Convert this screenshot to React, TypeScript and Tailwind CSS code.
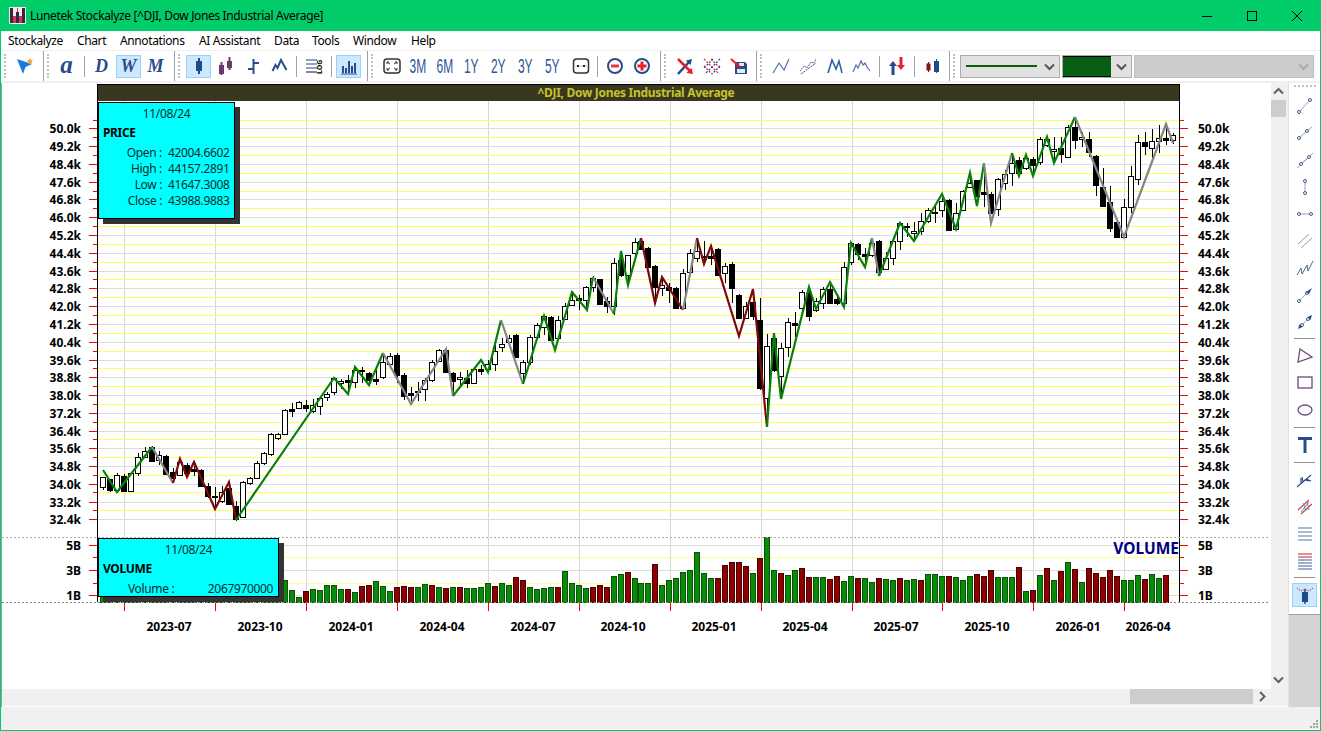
const candles: number[][] = [
  [477,487,477,490,0],[479,490,479,492,1],[475,490,473,490,0],[476,491,474,491,1],[473,491,473,491,0],
  [457,473,453,476,0],[451,457,447,458,0],[447,461,446,462,1],[455,460,451,465,0],[456,474,455,475,1],
  [472,478,468,483,1],[462,475,460,475,0],[465,473,463,477,1],[469,471,466,476,1],[470,486,469,487,1],
  [486,496,483,498,1],[496,497,487,506,1],[492,501,486,503,0],[488,504,485,504,1],[506,519,501,521,1],
  [482,517,481,517,0],[478,483,477,485,0],[463,478,461,479,0],[453,463,452,465,0],[434,454,433,456,0],
  [434,438,433,440,0],[410,434,409,435,0],[409,411,403,417,1],[402,408,401,409,0],[405,408,400,412,1],
  [405,411,399,413,0],[398,406,397,415,0],[394,397,392,401,0],[378,392,377,395,0],[381,383,379,389,0],
  [380,382,375,390,1],[370,382,367,388,0],[370,371,367,383,1],[373,380,372,383,1],[379,381,370,385,1],
  [362,377,355,379,0],[356,364,353,365,0],[355,375,353,383,1],[375,396,373,400,1],[393,395,387,401,1],
  [391,392,382,401,0],[380,389,378,401,0],[362,380,360,382,0],[350,361,349,362,0],[350,372,349,373,1],
  [373,381,372,395,1],[377,379,372,387,0],[378,383,370,388,1],[369,383,368,384,0],[369,371,365,375,1],
  [364,369,360,372,0],[351,364,340,371,0],[344,347,338,352,0],[338,342,335,345,0],[335,357,334,358,1],
  [362,373,360,383,0],[337,362,335,365,0],[325,337,323,340,0],[316,327,315,335,0],[317,340,316,340,1],
  [320,338,316,339,0],[306,319,303,320,0],[300,305,292,306,0],[298,300,295,310,1],[287,300,286,310,0],
  [278,287,276,292,0],[279,304,279,305,1],[301,306,297,313,1],[263,306,258,315,0],[260,275,258,277,1],
  [255,275,255,285,0],[242,253,238,260,0],[241,249,238,250,1],[248,267,247,268,1],[266,287,265,302,1],
  [285,288,277,296,0],[287,290,283,303,1],[288,308,287,309,1],[273,308,269,310,0],[253,272,249,273,0],
  [251,258,238,262,0],[256,257,241,265,1],[256,258,245,265,1],[249,275,248,276,1],[266,273,263,283,0],
  [264,288,262,303,1],[295,318,294,318,1],[306,318,302,319,0],[302,316,302,320,1],[320,388,298,390,1],
  [346,398,334,425,0],[338,370,333,372,1],[348,376,343,396,0],[322,347,318,357,0],[323,325,312,337,1],
  [292,308,290,310,0],[293,316,288,321,1],[301,310,298,312,0],[289,303,287,309,0],[289,303,285,304,1],
  [299,303,295,305,1],[267,303,262,304,0],[243,262,242,265,0],[244,254,243,260,1],[254,256,248,265,1],
  [243,255,238,257,0],[241,272,240,273,1],[258,269,252,270,0],[241,258,240,265,0],[223,241,222,250,0],
  [226,227,223,237,1],[231,233,222,240,0],[221,231,213,235,0],[210,221,208,223,0],[212,213,205,223,1],
  [201,210,198,217,0],[200,230,199,231,1],[213,229,203,230,0],[191,210,190,211,0],[183,187,173,188,0],
  [180,196,180,198,1],[192,194,163,207,1],[194,213,192,213,1],[179,209,178,216,0],[174,183,170,190,0],
  [163,173,153,186,0],[160,173,157,176,1],[158,168,155,170,0],[159,165,157,175,1],[139,162,137,165,0],
  [139,145,137,147,0],[149,151,137,163,0],[148,154,137,163,1],[127,157,125,157,0],[127,140,117,149,1],
  [137,139,132,147,0],[139,152,132,157,1],[156,185,155,196,1],[187,206,168,207,1],[202,228,186,232,1],
  [222,237,222,238,1],[207,237,199,238,0],[176,207,166,213,0],[142,179,135,185,0],[142,146,132,155,1],
  [141,148,129,158,0],[138,141,125,153,0],[138,140,125,145,1],[135,140,133,144,0],
]

// negative = maroon bar
const volumes: number[] = [
  ...Array(26).fill(596),
  580,590,597,-591,589,590,585,585,589,-589,592,-586,-585,581,586,591,-587,
  -586,-587,587,584,-585,587,-588,587,-587,588,588,587,583,-586,583,585,-577,-580,587,589,588,587,-587,
  571,583,585,588,-587,-585,-587,576,574,-572,578,583,583,-564,585,580,578,572,570,552,573,578,-578,
  -565,-562,-562,-566,573,-558,537,570,-573,575,570,-568,-577,577,577,-579,-576,581,576,-578,578,582,
  -578,579,580,-578,580,579,-580,574,574,576,-576,577,580,576,-574,-576,-570,577,
  577,577,-567,591,-590,575,-568,580,-571,562,-569,582,-568,-573,-577,-570,-576,580,580,575,-579,574,578,-575,
]

const G = '#0a800a'
const R = '#7d0a0a'
const S = '#858585'
const zigzag: [string, number[]][] = [
  [G, [103,470,117,492,152,447]],
  [S, [152,447,173,483]],
  [R, [173,483,180,459,187,477,194,462,215,509,229,482,236,520]],
  [G, [236,520,334,378,348,394,355,367,369,385,383,353]],
  [S, [383,353,411,404,446,349,453,396]],
  [G, [453,396,481,360,488,372,501,320]],
  [S, [501,320,523,384]],
  [G, [523,384,544,316,555,350,572,292,587,310,593,277]],
  [S, [593,277,614,314]],
  [G, [614,314,621,251,628,285,641,238]],
  [R, [641,238,655,303,662,277,683,310]],
  [S, [683,310,697,238]],
  [R, [697,238,704,264,711,246,739,336,753,289,767,427]],
  [G, [767,427,774,333,781,399,809,287,816,309,830,282,844,307,851,243,865,267,872,238]],
  [S, [872,238,879,276]],
  [G, [879,276,900,223,914,241,942,194,956,229,970,173,977,206,984,163]],
  [S, [984,163,991,223,1012,153]],
  [G, [1012,153,1019,176,1026,155,1033,176,1047,137,1054,163,1075,117]],
  [S, [1075,117,1124,237,1166,124,1173,143]],
]

const pitch = 1070 / 153
const cx = (i: number) => Math.round(103 + i * pitch)
const priceLabels = ['50.0k','49.2k','48.4k','47.6k','46.8k','46.0k','45.2k','44.4k','43.6k','42.8k','42.0k','41.2k','40.4k','39.6k','38.8k','38.0k','37.2k','36.4k','35.6k','34.8k','34.0k','33.2k','32.4k']
const grayY = [128,146,164,182,199,217,235,253,271,288,306,324,342,360,377,395,413,431,448,466,484,502,519].map(y => y + 0.5)
const yellowY = [120,137,155,173,191,208,226,244,262,279,297,315,333,351,368,386,404,422,439,457,475,492,510].map(y => y + 0.5)
const gridX = [124,215,306,397,488,579,670,761,852,942,1033,1124]
const dates: [string, number][] = [['2023-07',169],['2023-10',260],['2024-01',351],['2024-04',442],['2024-07',533],['2024-10',623],['2025-01',714],['2025-04',805],['2025-07',896],['2025-10',987],['2026-01',1078],['2026-04',1148]]
const volLabels: [string, number][] = [['5B',545],['3B',570],['1B',595]]

function Chart() {
  return (
    <svg viewBox="2 83 1269 606" className="block w-[1269px] h-[606px] shrink-0 bg-white">
      <rect x="97" y="84" width="1083" height="17" fill="#3a3720" />
      <line x1="97" y1="84.5" x2="1180" y2="84.5" stroke="#000" />
      <text x="636" y="97" textAnchor="middle" fill="#c4c42b" className="text-[12px] font-bold tracking-[-0.3px]">^DJI, Dow Jones Industrial Average</text>

      {gridX.map(x => <line key={x} x1={x + 0.5} y1="101" x2={x + 0.5} y2="602" stroke="#d8d8d8" />)}
      {grayY.map(y => <line key={y} x1="98" y1={y} x2="1179" y2={y} stroke="#dcdcdc" />)}
      {yellowY.map(y => <line key={y} x1="98" y1={y} x2="1179" y2={y} stroke="#ffff55" />)}
      {[545.5, 570.5, 595.5].map(y => <line key={y} x1="98" y1={y} x2="1179" y2={y} stroke="#dcdcdc" />)}
      {[557.5, 583.5].map(y => <line key={y} x1="98" y1={y} x2="1179" y2={y} stroke="#ffff88" />)}

      {volumes.map((v, i) => (
        <rect key={i} x={cx(i) - 2.5} y={Math.abs(v) + 0.5} width="5" height={602 - Math.abs(v)} fill={v < 0 ? '#8f0000' : '#078c07'} stroke={v < 0 ? '#4d0000' : '#0a520a'} />
      ))}

      {candles.map(([t, b, h, l, f], i) => (
        <g key={i}>
          <line x1={cx(i) + 0.5} y1={h} x2={cx(i) + 0.5} y2={l} stroke="#000" />
          <rect x={cx(i) - 2.5} y={t + 0.5} width="5" height={Math.max(b - t, 1)} fill={f ? '#000' : '#fff'} stroke="#000" />
        </g>
      ))}

      {zigzag.map(([c, p], i) => (
        <polyline key={i} points={p.join(',')} fill="none" stroke={c} strokeWidth="2.2" strokeMiterlimit="5" />
      ))}

      <line x1="97.5" y1="84" x2="97.5" y2="602" stroke="#000" />
      <line x1="1179.5" y1="84" x2="1179.5" y2="602" stroke="#000" />
      <line x1="2" y1="537.5" x2="1270" y2="537.5" stroke="#aaa" strokeDasharray="2 2" />
      <line x1="2" y1="602.5" x2="1270" y2="602.5" stroke="#888" strokeDasharray="2 2" />

      {grayY.map(y => (
        <g key={y} stroke="#f00">
          <line x1="89" y1={y} x2="97" y2={y} />
          <line x1="1180" y1={y} x2="1188" y2={y} />
        </g>
      ))}
      {yellowY.map(y => (
        <g key={y} stroke="#f00">
          <line x1="93" y1={y} x2="97" y2={y} />
          <line x1="1180" y1={y} x2="1184" y2={y} />
        </g>
      ))}
      {[545.5, 570.5, 595.5].map(y => (
        <g key={y} stroke="#f00">
          <line x1="89" y1={y} x2="97" y2={y} />
          <line x1="1180" y1={y} x2="1188" y2={y} />
        </g>
      ))}
      {[557.5, 583.5].map(y => (
        <g key={y} stroke="#f00">
          <line x1="93" y1={y} x2="97" y2={y} />
          <line x1="1180" y1={y} x2="1184" y2={y} />
        </g>
      ))}
      {gridX.map(x => <line key={x} x1={x + 0.5} y1="603" x2={x + 0.5} y2="611" stroke="#f00" />)}

      <g fill="#000" className="text-[12px] font-bold">
        {priceLabels.map((t, i) => (
          <g key={t}>
            <text x="81" y={grayY[i] + 4.5} textAnchor="end">{t}</text>
            <text x="1198" y={grayY[i] + 4.5}>{t}</text>
          </g>
        ))}
        {volLabels.map(([t, y]) => (
          <g key={t}>
            <text x="81" y={y + 5} textAnchor="end">{t}</text>
            <text x="1198" y={y + 5}>{t}</text>
          </g>
        ))}
        {dates.map(([t, x]) => <text key={t} x={x} y="631" textAnchor="middle">{t}</text>)}
      </g>
      <text x="1179" y="554" textAnchor="end" fill="#000080" className="text-[15.5px] font-bold">VOLUME</text>
    </svg>
  )
}

function PriceBox() {
  const rows = [['Open :','42004.6602'],['High :','44157.2891'],['Low :','41647.3008'],['Close :','43988.9883']]
  return (
    <div className="absolute left-[96px] top-[19px] w-[137px] h-[117px] bg-[#00ffff] border border-black shadow-[5px_5px_0_#333] text-[12px] leading-[16px] tracking-[-0.35px] text-[#0b2b2b]">
      <div className="text-center pt-[3px]">11/08/24</div>
      <div className="font-bold text-black pl-[4px] mt-[3px]">PRICE</div>
      <div className="mt-[4px]">
        {rows.map(([a, b]) => (
          <div key={a} className="flex">
            <span className="w-[63px] text-right shrink-0">{a}</span>
            <span className="ml-[6px]">{b}</span>
          </div>
        ))}
      </div>
    </div>
  )
}

function VolumeBox() {
  return (
    <div className="absolute left-[96px] top-[455px] w-[181px] h-[59px] bg-[#00ffff] border border-black shadow-[5px_5px_0_#333] text-[12px] leading-[16px] tracking-[-0.35px] text-[#0b2b2b]">
      <div className="text-center pt-[3px]">11/08/24</div>
      <div className="font-bold text-black pl-[4px] mt-[3px]">VOLUME</div>
      <div className="flex justify-between pl-[29px] pr-[5px] mt-[4px]">
        <span>Volume :</span>
        <span>2067970000</span>
      </div>
    </div>
  )
}

const NAVY = '#2b4c8c'

function I({ children, size = 20 }: { children: React.ReactNode; size?: number }) {
  return <svg width={size} height={size} viewBox="0 0 20 20" fill="none" className="shrink-0">{children}</svg>
}

function Slot({ children, on }: { children: React.ReactNode; on?: boolean }) {
  return (
    <div className="w-[27px] h-[23px] flex items-center justify-center shrink-0">
      <div className={'w-[25px] h-[23px] flex items-center justify-center border ' + (on ? 'bg-[#cce8ff] border-[#99d1ff]' : 'border-transparent')}>{children}</div>
    </div>
  )
}

function Sep({ w = 'w-[7px]' }: { w?: string }) {
  return (
    <div className={w + ' h-[21px] flex justify-center shrink-0'}>
      <div className="w-px h-full bg-[#a0a0a0]" />
    </div>
  )
}

function Grip() {
  return <div className="w-[2px] h-[24px] ml-[3px] mr-[5px] shrink-0 border-l-2 border-dotted border-[#c0c0c0]" />
}

function Band({ w, children }: { w: string; children: React.ReactNode }) {
  return <div className={w + ' h-full flex items-center shrink-0 border-r border-[#a0a0a0]'}><Grip />{children}</div>
}

function Letter({ c, big }: { c: string; big?: boolean }) {
  return <span className={"[font-family:'Liberation_Serif',serif] italic font-bold leading-none text-[#2b4c8c] " + (big ? 'text-[25px] -translate-y-[2px] -translate-x-[1px]' : 'text-[18px]')}>{c}</span>
}

function Range({ c }: { c: string }) {
  return <span className="text-[20px] leading-none text-[#2f5597] inline-block scale-x-[0.6] -translate-x-[1px] whitespace-nowrap [font-family:'Liberation_Sans',sans-serif]">{c}</span>
}

const Chev = ({ d, c = '#606060' }: { d: string; c?: string }) => (
  <svg width="11" height="11" viewBox="0 0 11 11" fill="none"><path d={d} stroke={c} strokeWidth="2" /></svg>
)

function Toolbar() {
  return (
    <div className="h-[33px] shrink-0 border-t border-b-2 border-[#f0f0f0] bg-white flex">
      <Band w="w-[43px]">
        <Slot>
          <I>
            <polygon points="2,3 17,8 10.5,11 8,18" fill="#1c78e0" />
            <path d="M15 2l1 2 2 .5-1.500 1.500.3 2-1.800-1-1.800 1 .3-2L12 4.500 14 4z" fill="#f3a421" />
          </I>
        </Slot>
      </Band>
      <Band w="w-[131px]">
        <Slot><Letter c="a" big /></Slot>
        <Sep />
        <Slot><Letter c="D" /></Slot>
        <Slot on><Letter c="W" /></Slot>
        <Slot><Letter c="M" /></Slot>
      </Band>
      <Band w="w-[193px]">
        <Slot on>
          <I>
            <line x1="10" y1="2" x2="10" y2="18" stroke="#1f4a8c" strokeWidth="2" />
            <rect x="7" y="5" width="6" height="10" fill="#1f4a8c" />
          </I>
        </Slot>
        <Slot>
          <I>
            <line x1="5.500" y1="6" x2="5.500" y2="19" stroke="#6b3a6b" strokeWidth="2" />
            <rect x="3" y="9" width="5" height="9" fill="#6b3a6b" />
            <line x1="13.500" y1="1" x2="13.500" y2="14" stroke="#6b3a6b" strokeWidth="2" />
            <rect x="11" y="5" width="5" height="7" fill="#6b3a6b" />
          </I>
        </Slot>
        <Slot>
          <I>
            <path d="M10.500 3v15M5 13h5.500M10.500 7H16" stroke={NAVY} strokeWidth="2" />
          </I>
        </Slot>
        <Slot>
          <I>
            <path d="M2.500 15l3-6 2 3 3.500-8 5.500 10" stroke={NAVY} strokeWidth="2" />
          </I>
        </Slot>
        <Sep />
        <Slot>
          <I>
            <path d="M2 4h11M2 8h11M2 12h11" stroke="#8fa3c4" strokeWidth="2" />
            <path d="M2 16h11" stroke="#111" strokeWidth="1" />
            <text x="-18" y="18" transform="rotate(-90)" fill="#000" className="text-[7px] font-bold">LOG</text>
          </I>
        </Slot>
        <Sep w="w-[8px]" />
        <Slot on>
          <I>
            <path d="M4 17v-7M7 17v-5M10 17V5M13 17v-7M16 17V7" stroke={NAVY} strokeWidth="2" />
            <path d="M2 18h16" stroke={NAVY} />
          </I>
        </Slot>
      </Band>
      <Band w="w-[293px]">
        <Slot>
          <I>
            <rect x="2" y="3" width="16" height="14" rx="3" stroke="#333" strokeWidth="1.500" />
            <path d="M5 6l3 2M5 6h2M5 6v2M15 6l-3 2M15 6h-2M15 6v2M5 14l3-2M5 14h2M5 14v-2M15 14l-3-2M15 14h-2M15 14v-2" stroke="#333" />
          </I>
        </Slot>
        <Slot><Range c="3M" /></Slot>
        <Slot><Range c="6M" /></Slot>
        <Slot><Range c="1Y" /></Slot>
        <Slot><Range c="2Y" /></Slot>
        <Slot><Range c="3Y" /></Slot>
        <Slot><Range c="5Y" /></Slot>
        <Slot>
          <I>
            <rect x="2.500" y="3" width="15" height="14" rx="3" stroke="#333" strokeWidth="1.500" />
            <path d="M3 10h14" stroke="#ccc" />
            <rect x="6" y="9" width="2" height="2" fill="#222" />
            <rect x="12" y="9" width="2" height="2" fill="#222" />
          </I>
        </Slot>
        <Sep />
        <Slot>
          <I>
            <circle cx="10" cy="10" r="7" stroke={NAVY} strokeWidth="2" />
            <rect x="6" y="8.500" width="8" height="3" fill="#e8383d" />
          </I>
        </Slot>
        <Slot>
          <I>
            <circle cx="10" cy="10" r="7" stroke={NAVY} strokeWidth="2" />
            <path d="M10 5.500v9M5.500 10h9" stroke="#e8202a" strokeWidth="3" />
          </I>
        </Slot>
      </Band>
      <Band w="w-[96px]">
        <Slot>
          <I>
            <path d="M3 18L15 5" stroke="#1f4a8c" strokeWidth="2.500" />
            <path d="M17 3l-6 1.500 4.500 4.500z" fill="#1f4a8c" />
            <path d="M3 3l12 12" stroke="#f01c24" strokeWidth="2.500" />
            <path d="M18 18l-6.500-1 5-5z" fill="#f01c24" />
          </I>
        </Slot>
        <Slot>
          <I>
            <path d="M2 3l15 15M9 3l9 9M2 10l8 8" stroke="#e8202a" strokeWidth="1.300" strokeDasharray="2 1.500" />
            <path d="M18 3L3 18M11 3l-9 9M18 10l-8 8" stroke="#1f4a8c" strokeWidth="1.300" strokeDasharray="2 1.500" />
          </I>
        </Slot>
        <Slot>
          <I>
            <path d="M6 6h10l2 2v10H6z" fill="#2b4c8c" />
            <rect x="8" y="13" width="8" height="4" fill="#e8e8ee" />
            <rect x="10" y="7" width="5" height="3" fill="#e8e8ee" />
            <path d="M2 3l9 8" stroke="#f01c24" strokeWidth="2" />
          </I>
        </Slot>
      </Band>
      <Band w="w-[193px]">
        <Slot>
          <I><path d="M2 17L8 7l5 7 5-11" stroke="#4f72aa" strokeWidth="1.200" /></I>
        </Slot>
        <Slot>
          <I>
            <path d="M2 15l4-5 3 2 4-6 3 1 2-4" stroke="#4f72aa" strokeDasharray="2 .5" />
            <path d="M3 18L18 7" stroke="#444" strokeDasharray="2 1" />
          </I>
        </Slot>
        <Slot>
          <I><path d="M3 17L7 4l4 9 3-8 3 12" stroke="#2b5aa0" strokeWidth="1.500" /></I>
        </Slot>
        <Slot>
          <I><path d="M1 16l3-7 2 3 3-7 2 4 2-2 2 4 3 4" stroke="#4f72aa" strokeWidth="1.200" /></I>
        </Slot>
        <Sep w="w-[8px]" />
        <Slot>
          <I>
            <path d="M6 19V8" stroke="#1f4a8c" strokeWidth="3" />
            <path d="M6 5L2 10h8z" fill="#1f4a8c" />
            <path d="M14 1v9" stroke="#e8202a" strokeWidth="3" />
            <path d="M14 14l-4-5h8z" fill="#e8202a" />
          </I>
        </Slot>
        <Sep w="w-[9px]" />
        <Slot>
          <I>
            <path d="M5.500 6v10" stroke="#8f1010" />
            <rect x="3.500" y="7.500" width="4" height="7" fill="#8f1010" />
            <path d="M13.500 3v14" stroke="#1f4a8c" />
            <rect x="11" y="5" width="5" height="11" fill="#1f4a8c" />
          </I>
        </Slot>
      </Band>
      <div className="flex items-center h-full">
        <Grip />
        <div className="flex gap-[2px]">
          <div className="w-[100px] h-[23px] bg-[#e1e1e1] border border-[#adadad] flex items-center pl-[5px]">
            <div className="w-[71px] h-[2px] bg-[#0b5f0b]" />
            <div className="ml-auto mr-[4px] flex"><Chev d="M1 3.500l4.500 4.500L10 3.500" c="#555" /></div>
          </div>
          <div className="w-[70px] h-[23px] bg-[#e1e1e1] border border-[#adadad] flex items-center">
            <div className="w-[48px] h-[21px] bg-[#065f13] border-y border-black" />
            <div className="ml-auto mr-[4px] flex"><Chev d="M1 3.500l4.500 4.500L10 3.500" c="#555" /></div>
          </div>
          <div className="w-[180px] h-[23px] bg-[#cccccc] border border-[#bfbfbf] flex items-center">
            <div className="ml-auto mr-[4px] flex"><Chev d="M1 3.500l4.500 4.500L10 3.500" c="#a8a8a8" /></div>
          </div>
        </div>
      </div>
    </div>
  )
}

function End({ x1, y1, x2, y2 }: { x1: number; y1: number; x2: number; y2: number }) {
  return (
    <>
      <line x1={x1} y1={y1} x2={x2} y2={y2} stroke="#8fa3c4" />
      <circle cx={x1} cy={y1} r="1.500" fill="#fff" stroke="#4a5a7a" />
      <circle cx={x2} cy={y2} r="1.500" fill="#fff" stroke="#4a5a7a" />
    </>
  )
}

function RSlot({ children, on }: { children: React.ReactNode; on?: boolean }) {
  return (
    <div className="h-[27px] flex items-center justify-center shrink-0">
      <div className={'w-[25px] h-[24px] flex items-center justify-center border ' + (on ? 'bg-[#cce8ff] border-[#99d1ff]' : 'border-transparent')}>{children}</div>
    </div>
  )
}

function RSep({ h }: { h: string }) {
  return (
    <div className={h + ' flex items-center justify-center shrink-0'}>
      <div className="w-[21px] h-px bg-[#909090]" />
    </div>
  )
}

function RightBar() {
  return (
    <div className="w-[32px] shrink-0 flex flex-col border-l border-[#e0e0e0]">
      <div className="h-[531px] bg-white flex flex-col shrink-0">
        <div className="h-[9px] flex justify-center pt-[2px] shrink-0">
          <div className="w-[22px] h-[2px] border-t-2 border-dotted border-[#c0c0c0]" />
        </div>
        <RSlot><I><End x1={4} y1={16} x2={15} y2={4} /></I></RSlot>
        <RSlot><I><End x1={4} y1={15} x2={12} y2={8} /><line x1="12" y1="8" x2="17" y2="4" stroke="#8fa3c4" /></I></RSlot>
        <RSlot><I><line x1="2" y1="18" x2="18" y2="3" stroke="#8fa3c4" /><End x1={6} y1={14} x2={14} y2={7} /></I></RSlot>
        <RSlot><I><End x1={10} y1={4} x2={10} y2={16} /></I></RSlot>
        <RSlot><I><End x1={4} y1={10} x2={16} y2={10} /></I></RSlot>
        <RSlot><I><path d="M3 13L14 3M6 17L17 7" stroke="#8f9db8" /></I></RSlot>
        <RSlot><I><path d="M2 17l4-7 1 6 5-9 1 6 5-10" stroke="#4f648e" /></I></RSlot>
        <RSlot><I><End x1={4} y1={16} x2={12} y2={8} /><path d="M11 7L17 3l-3 6z" fill="#2b4c8c" /></I></RSlot>
        <RSlot><I><End x1={7} y1={13} x2={13} y2={7} /><path d="M3 17l1.500-5 3 3zM17 3l-1.500 5-3-3z" fill="#2b4c8c" /></I></RSlot>
        <RSep h="h-[7px]" />
        <RSlot><I><polygon points="5,3 17,11 3,16" stroke="#6b4a7a" strokeWidth="1.300" /></I></RSlot>
        <RSlot><I><rect x="3" y="4" width="14" height="11" stroke="#6b4a7a" strokeWidth="1.300" /></I></RSlot>
        <RSlot><I><ellipse cx="10" cy="10" rx="7" ry="5" stroke="#6b4a7a" strokeWidth="1.300" /></I></RSlot>
        <RSep h="h-[8px]" />
        <RSlot><I><path d="M3 3.500h14M10 3.500V18" stroke="#2b4c8c" strokeWidth="3" /></I></RSlot>
        <RSep h="h-[8px]" />
        <RSlot><I><path d="M2 17L16 5M6 13L6 8M9.500 10l5 1M11 9l5 2M8 12l-1-5" stroke="#2b4c8c" strokeWidth="1.200" /></I></RSlot>
        <RSlot><I><path d="M3 13L14 3M6 17L17 7" stroke="#d04040" strokeWidth="1.200" /><path d="M6 15L14 5M8 6l3 8M12 5l2 8" stroke="#6d84a8" /></I></RSlot>
        <RSlot><I><path d="M3 4h14M3 8h14M3 12h14M3 16h14" stroke="#93a5c4" strokeWidth="1.500" /></I></RSlot>
        <RSlot><I><path d="M3 3h14M3 6h14" stroke="#c8202a" /><path d="M3 9h14M3 12h14M3 15h14M3 18h14" stroke="#7f95bb" strokeWidth="1.300" /></I></RSlot>
        <RSep h="h-[7px]" />
        <RSlot on>
          <I>
            <path d="M2 3l4 3 4-2 4 2 4-3" stroke="#c0333a" strokeDasharray="1.500 1" />
            <path d="M10 4v15" stroke="#1f4a8c" strokeWidth="1.500" />
            <rect x="7" y="7" width="6" height="10" fill="#1f4a8c" />
          </I>
        </RSlot>
      </div>
      <div className="flex-1 bg-[#d4d4d4] border-t border-[#a0a0a0]" />
    </div>
  )
}

export default function App() {
  return (
    <div className="w-[1321px] h-[731px] flex flex-col overflow-hidden border border-t-0 border-[#00cc6a] bg-[#f0f0f0] text-[12px] text-black [font-family:'Noto_Sans',sans-serif]">
      <div className="h-[31px] shrink-0 bg-[#00cc6a] flex items-center">
        <div className="ml-[8px] w-[17px] h-[17px] flex shrink-0">
          <svg width="17" height="17" viewBox="0 0 17 17">
            <rect width="17" height="17" fill="#f4e8ec" />
            <path d="M1 1h3v15H1zM7 5h3v11H7zM13 1h3v15h-3z" fill="#3b2440" />
            <path d="M4 9h3v7H4zM10 9h3v7h-3z" fill="#c0405a" />
            <path d="M8 1h1v4H8z" fill="#c0405a" />
          </svg>
        </div>
        <span className="ml-[4px] tracking-[-0.36px] whitespace-nowrap">Lunetek Stockalyze [^DJI, Dow Jones Industrial Average]</span>
        <div className="ml-auto flex shrink-0">
          <div className="w-[45px] h-[31px] flex items-center justify-center">
            <svg width="10" height="10" viewBox="0 0 10 10"><path d="M0 5.500h10" stroke="#000" /></svg>
          </div>
          <div className="w-[45px] h-[31px] flex items-center justify-center">
            <svg width="10" height="10" viewBox="0 0 10 10"><rect x=".5" y=".5" width="9" height="9" fill="none" stroke="#000" /></svg>
          </div>
          <div className="w-[46px] h-[31px] flex items-center justify-center">
            <svg width="10" height="10" viewBox="0 0 10 10"><path d="M0 0l10 10M10 0L0 10" stroke="#000" /></svg>
          </div>
        </div>
      </div>

      <div className="h-[19px] shrink-0 bg-white flex items-center pl-[7px] tracking-[-0.38px] whitespace-nowrap">
        <span className="w-[69px]">Stockalyze</span>
        <span className="w-[43px]">Chart</span>
        <span className="w-[79px]">Annotations</span>
        <span className="w-[75px]">AI Assistant</span>
        <span className="w-[38px]">Data</span>
        <span className="w-[41px]">Tools</span>
        <span className="w-[58px]">Window</span>
        <span>Help</span>
      </div>

      <Toolbar />

      <div className="flex h-[624px] shrink-0">
        <div className="w-[1287px] shrink-0 flex flex-col border-l border-[#a0a0a0]">
          <div className="flex h-[606px] relative">
            <Chart />
            <PriceBox />
            <VolumeBox />
            <div className="w-[15px] bg-[#f0f0f0] flex flex-col items-center">
              <div className="h-[17px] flex items-center"><Chev d="M1 7.500l4.500-4.500L10 7.500" /></div>
              <div className="w-full h-[17px] bg-[#cdcdcd]" />
              <div className="mt-auto h-[17px] flex items-center mb-[1px]"><Chev d="M1 3.500l4.500 4.500L10 3.500" /></div>
            </div>
          </div>
          <div className="h-[15px] flex items-center bg-[#f0f0f0]">
            <div className="ml-[1128px] w-[123px] h-full bg-[#cdcdcd]" />
            <div className="ml-[4px] flex"><Chev d="M3 1l4.500 4.500L3 10" /></div>
          </div>
          <div className="flex-1 border-b border-white" />
        </div>
        <RightBar />
      </div>

      <div className="flex-1 bg-[#f0f0f0] flex items-end justify-end pr-[2px] pb-[2px]">
        <div className="grid grid-cols-3 gap-[1px]">
          <span />
          <span />
          <span className="w-[2px] h-[2px] bg-[#a0a0a0]" />
          <span />
          <span className="w-[2px] h-[2px] bg-[#a0a0a0]" />
          <span className="w-[2px] h-[2px] bg-[#a0a0a0]" />
          <span className="w-[2px] h-[2px] bg-[#a0a0a0]" />
          <span className="w-[2px] h-[2px] bg-[#a0a0a0]" />
          <span className="w-[2px] h-[2px] bg-[#a0a0a0]" />
        </div>
      </div>
    </div>
  )
}
